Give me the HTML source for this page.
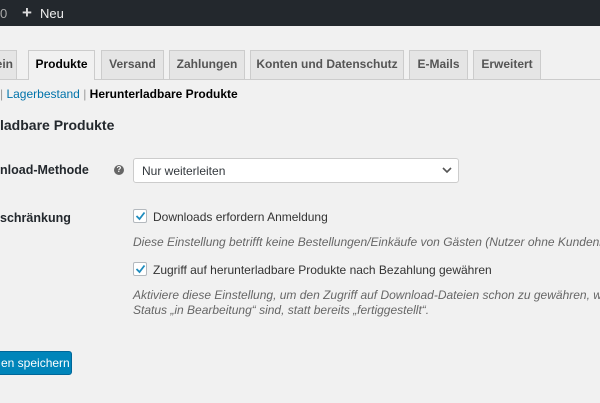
<!DOCTYPE html>
<html><head><meta charset="utf-8"><style>
*{margin:0;padding:0;box-sizing:border-box}
body{width:600px;height:403px;overflow:hidden;background:#f1f1f1;font-family:"Liberation Sans",sans-serif;font-size:13px;color:#23282d;position:relative}
.a{position:absolute;white-space:nowrap}
.bar{left:0;top:0;width:600px;height:26px;background:#23282d;color:#eee}
.tab{top:50px;height:29px;border:1px solid #ccc;border-bottom:none;background:#e5e5e5;color:#555;font-weight:bold;font-size:12px;line-height:27px;text-align:center}
.tab.on{background:#f1f1f1;color:#000;height:30px}
.line{left:0;top:79px;width:600px;height:1px;background:#ccc}
b{font-weight:bold}
.desc{font-style:italic;color:#666}
.cb{width:14px;height:14px;border:1px solid #b4b9be;background:#fff;border-radius:2px}
</style></head><body>
<div class="a bar"></div>
<div class="a" style="left:0;top:6px;color:#aaa;font-size:13px">0</div>
<div class="a" style="left:22px;top:4px;color:#ddd;font-size:17px;font-weight:bold;line-height:17px">+</div>
<div class="a" style="left:40px;top:6px;color:#eee;font-size:13px">Neu</div>

<div class="a line"></div>
<div class="a tab" style="left:-10px;width:27px;text-align:right;padding-right:3px">ein</div>
<div class="a tab on" style="left:28px;width:67px">Produkte</div>
<div class="a tab" style="left:101px;width:63px">Versand</div>
<div class="a tab" style="left:169px;width:76px">Zahlungen</div>
<div class="a tab" style="left:250px;width:154px">Konten und Datenschutz</div>
<div class="a tab" style="left:409px;width:59px">E-Mails</div>
<div class="a tab" style="left:473px;width:68px">Erweitert</div>

<div class="a" style="left:0;top:87px;font-size:12px;color:#999">| <span style="color:#0073aa">Lagerbestand</span> | <b style="color:#000">Herunterladbare Produkte</b></div>
<div class="a" style="left:0;top:117px;font-size:14px;font-weight:bold">ladbare Produkte</div>

<div class="a" style="left:0;top:163px;font-weight:bold;font-size:12.5px">nload-Methode</div>
<div class="a" style="left:114px;top:165px;width:10px;height:10px;border-radius:50%;background:#666;color:#fff;font-size:8px;line-height:10px;text-align:center;font-weight:bold">?</div>
<div class="a" style="left:133px;top:158px;width:326px;height:25px;border:1px solid #ccc;background:#fff;border-radius:3px;padding:5px 8px;font-size:12px;color:#32373c">Nur weiterleiten</div>
<svg class="a" style="left:442px;top:167px" width="10" height="7" viewBox="0 0 10 7"><path d="M1 1l4 4 4-4" fill="none" stroke="#555" stroke-width="1.6"/></svg>

<div class="a" style="left:0;top:211px;font-weight:bold;font-size:12.5px">schränkung</div>
<div class="a cb" style="left:133px;top:209px"></div>
<svg class="a" style="left:135px;top:211px" width="11" height="10" viewBox="0 0 11 10"><path d="M1.5 5l3 3 5-6.5" fill="none" stroke="#1e8cbe" stroke-width="1.8"/></svg>
<div class="a" style="left:153px;top:210px;font-size:12px;color:#333">Downloads erfordern Anmeldung</div>
<div class="a desc" style="left:133px;top:235px;font-size:12px">Diese Einstellung betrifft keine Bestellungen/Einkäufe von Gästen (Nutzer ohne Kundenkonto)</div>
<div class="a cb" style="left:133px;top:262px"></div>
<svg class="a" style="left:135px;top:264px" width="11" height="10" viewBox="0 0 11 10"><path d="M1.5 5l3 3 5-6.5" fill="none" stroke="#1e8cbe" stroke-width="1.8"/></svg>
<div class="a" style="left:153px;top:263px;font-size:12px;color:#333">Zugriff auf herunterladbare Produkte nach Bezahlung gewähren</div>
<div class="a desc" style="left:133px;top:288px;font-size:12px">Aktiviere diese Einstellung, um den Zugriff auf Download-Dateien schon zu gewähren, wenn</div>
<div class="a desc" style="left:133px;top:303px;font-size:12px">Status „in Bearbeitung“ sind, statt bereits „fertiggestellt“.</div>

<div class="a" style="left:-6px;top:351px;width:78px;height:24px;background:#0085ba;border:1px solid #006799;border-radius:3px;color:#fff;font-size:12px;line-height:22px;padding-left:6px">en speichern</div>
</body></html>
